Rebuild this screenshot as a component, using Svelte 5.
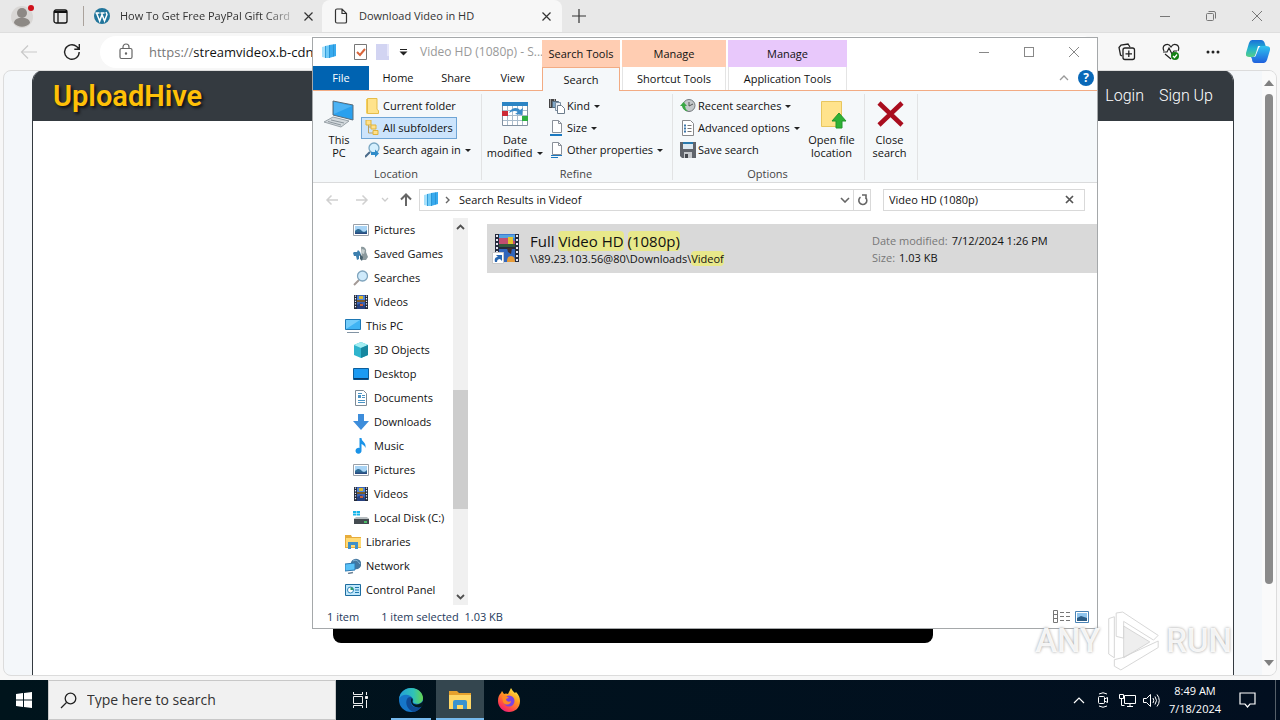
<script>
  const film = `<path d="M1 1h14v14H1z" fill="#222a3a"/><path d="M4 1h8v14H4z" fill="#3b62b5"/><path d="M4 2h8v5H4z" fill="#4f86d8"/><path d="M6 2h4v3H6z" fill="#d8b62e"/><path d="M4 6h8v2H4z" fill="#7a5a2a"/><path d="M4 11l4-2 4 3v3H4z" fill="#26407e"/><path d="M7 10h3v2H7z" fill="#c8603a"/><path d="M2.500 1.500v13M13.500 1.500v13" stroke="#eef" stroke-width="1.200" stroke-dasharray="1.300 1.300"/>`;
  const picture = `<path d="M.5 2.500h15v11H.5z" fill="#fff" stroke="#9aa0a8"/><path d="M2 4h12v8H2z" fill="#a9d4f5"/><path d="M2 9c3-3 5-2 7 0s4 0 5-1v4H2z" fill="#2f6c96"/><path d="M2 10.500h12V12H2z" fill="#2a4b80"/>`;
  const page = `<path d="M3.500.5h6l3 3v9h-9z" fill="#fff" stroke="#8a9099"/><path d="M9.500.5v3h3" fill="none" stroke="#8a9099"/>`;
  const icons = {
    film, picture,
    games: `<path d="M8 1c3-1 6 2 5 5l2 5-2 3H9z" fill="#8c9a9e"/><path d="M9 3l3 1-1 4-3-1z" fill="#c7d0d0"/><path d="M1 6h3l1-2 2 2 1 3-2 1v3l-2 1-1-4H1l-1-3z" fill="#3d7fae"/><path d="M7 8l3 3-1 4-2-2z" fill="#46606e"/>`,
    lens: `<path d="M1 15l5-5" stroke="#a39a96" stroke-width="2"/><circle cx="9.500" cy="6" r="5" fill="#cfeafb" stroke="#7fa4bd" stroke-width="1.300"/>`,
    pc: `<path d="M.5 1.500h15v10H.5z" fill="#3fb4f4" stroke="#1e78b4"/><path d="M1 2h14L1 11z" fill="#74cdfb"/><path d="M2 14.500h12" stroke="#8294a4"/>`,
    cube: `<path d="M8 0l7 3v10l-7 3-7-3V3z" fill="#2fb4cd"/><path d="M8 0l7 3-7 3-7-3z" fill="#a3eef2"/><path d="M8 6l7-3v10l-7 3z" fill="#16879f"/>`,
    desktop: `<path d="M.5 2.500h15v11H.5z" fill="#1b9af2" stroke="#0c5e9c"/><path d="M1 12h14v1.500H1z" fill="#083b6b"/>`,
    docs: `<path d="M2.500.5h8l3 3v12h-11z" fill="#fff" stroke="#7e8b96"/><path d="M5 5h3v3H5z" fill="#4b94c5"/><path d="M9 5.500h3M9 7.500h3M5 10.500h7M5 12.500h7M5 3.500h4" stroke="#4b94c5"/>`,
    down: `<path d="M5 0h6v7h5l-8 9-8-9h5z" fill="#3d8ddb"/>`,
    music: `<path d="M6.500 0H8.500c0 4 5 4 4 10-1-3-4-4-4-4v6.500a3 3 0 1 1-2-2.500z" fill="#1a93e8"/>`,
    disk: `<path d="M1 9l2-1h11l2 1v5H1z" fill="#444b50"/><path d="M1 9l2-2h11l2 2z" fill="#b7bdc0"/><path d="M11 12h3" stroke="#4de16e" stroke-width="1.500"/><path d="M0 1h3v2H0zM3.500 1H7v2H3.500zM0 3.500h3v2H0zM3.500 3.500H7v2H3.500z" fill="#17b5ea"/>`,
    libs: `<path d="M0 1h6l1 2h9v11H0z" fill="#e7ac3b"/><path d="M1 4h15v9H1z" fill="#ffda75"/><path d="M3 15V8h10v7h-3v-4H6v4z" fill="#3f90c9"/>`,
    net: `<circle cx="11" cy="6" r="5.300" fill="#4477a0"/><path d="M8 3c3-2 5 0 7 3" stroke="#86b8da" fill="none"/><path d="M0 6l10-1v7L0 13z" fill="#5ac2f8" stroke="#2b78b2"/><path d="M3 15.500l5-1" stroke="#6b8296" stroke-width="1.500"/>`,
    panel: `<path d="M.5 2.500h15v11H.5z" fill="#bfe7fb" stroke="#1d6c9f"/><circle cx="5.500" cy="8" r="3" fill="#fff" stroke="#2d86bb"/><path d="M5.500 8V5a3 3 0 0 1 3 3z" fill="#2d9c6a"/><path d="M10 5.500h4M10 8h4M10 10.500h4" stroke="#1f78ae"/>`,
    results: `<path d="M1 3l4-1v12l-4-1z" fill="#a6e0fb"/><path d="M4 2l5-1v13H4z" fill="#6fcbf8"/><path d="M8 1l7-1v12l-7 2z" fill="#38aaee"/><path d="M4.500 2v12M8.500 1v13M12.500 .5v12" stroke="#2690d2" stroke-width=".8"/>`,
    check: `<path d="M1.500 .5h12v15h-12z" fill="#fff" stroke="#777"/><path d="M4 8l3 3 5-6" fill="none" stroke="#d9653b" stroke-width="2"/>`,
    ghost: `<path d="M1 0h11v12h2v4H1z" fill="#d2d4f2"/><path d="M12 0h2v12h-2z" fill="#e6e6fa"/>`,
    folder: `<path d="M1 1h10v14.500H1z" fill="#f5cf5c"/><path d="M2.500.5h9.500v11l1.500 1v3h-11z" fill="#ffe38c" stroke="#e5bd4b"/>`,
    subs: `<path d="M3.500 5v8H9M3.500 7H9" fill="none" stroke="#b89f63"/><path d="M1 0h5v5H1zM6 5h5v4H6zM8 10.500h5v4H8z" fill="#ffe08a" stroke="#dfb33d"/>`,
    again: `<path d="M0 15l5-5" stroke="#4a6b8a" stroke-width="2"/><circle cx="9" cy="6" r="5" fill="#d4effd" stroke="#78a6c2" stroke-width="1.300"/><path d="M6 10h4V7.500l4 4-4 4V13H6z" fill="#2f8cc9"/>`,
    kind: `<path d="M0 1h7v9H0z" fill="#444"/><path d="M1.500 1.500v8M5.500 1.500v8" stroke="#fff" stroke-dasharray="1 1"/><path d="M3.500 3.500h6v6h-6z" fill="#80a8c8" stroke="#566d80"/><path d="M6.500 4.500h5v8h-5z" fill="#e8eef4" stroke="#7a8fa2"/><path d="M8.500 7.500h4l3 3v5h-7z" fill="#fff" stroke="#6c7c8b"/>`,
    size: page + `<path d="M1 15h12" stroke="#1c79c0" stroke-width="2"/>`,
    props: page + `<path d="M2 13.500h11M2 15.500h7" stroke="#1c79c0"/>`,
    recent: `<circle cx="9" cy="7.500" r="6" fill="#c4c8ca" stroke="#73797c"/><path d="M9 4v4l4-2" fill="none" stroke="#555"/><path d="M0 8l3.500-4L7 8H5q0 3 3 5-5 0-6-5z" fill="#3aa845"/>`,
    advanced: `<path d="M2.500.5h8l3 3v12h-11z" fill="#fff" stroke="#88898c"/><path d="M4 5.500h2M4 8.500h2M4 11.500h2" stroke="#3c76aa" stroke-width="2"/><path d="M7.500 5.500h4M7.500 8.500h4M7.500 11.500h4" stroke="#777"/>`,
    save: `<path d="M0 0h16v16H2l-2-2z" fill="#60646b"/><path d="M3 1h10v6H3z" fill="#dce8f1"/><path d="M3 0h10v2H3z" fill="#2979ad"/><path d="M4 10h8v6H4z" fill="#c5c8cc"/><path d="M5 12h3v4H5z" fill="#44474d"/>`
  };
  const tree = [
    ['Pictures', 'picture', 1], ['Saved Games', 'games', 1], ['Searches', 'lens', 1], ['Videos', 'film', 1],
    ['This PC', 'pc', 0], ['3D Objects', 'cube', 1], ['Desktop', 'desktop', 1], ['Documents', 'docs', 1],
    ['Downloads', 'down', 1], ['Music', 'music', 1], ['Pictures', 'picture', 1], ['Videos', 'film', 1],
    ['Local Disk (C:)', 'disk', 1], ['Libraries', 'libs', 0], ['Network', 'net', 0], ['Control Panel', 'panel', 0]
  ];
  const refine = [['Kind', 'kind', true], ['Size', 'size', true], ['Other properties', 'props', true]];
  const options = [['Recent searches', 'recent', true], ['Advanced options', 'advanced', true], ['Save search', 'save', false]];
  let address = $state('streamvideox.b-cdn.net');
  let query = $state('Video HD (1080p)');
  let taskQuery = $state('');
</script>

{#snippet icon(name)}
  <svg class="i16" viewBox="0 0 16 16" aria-hidden="true">{@html icons[name]}</svg>
{/snippet}

{#snippet cmd(label, name, drop, active)}
  <button class="cmd" class:active>{@render icon(name)}<span>{label}</span>{#if drop}<i class="caret"></i>{/if}</button>
{/snippet}

<div class="screen">
  <main class="browser">
    <div class="tabstrip">
      <button class="profile" aria-label="Profile">
        <svg width="24" height="24" viewBox="0 0 24 24"><circle cx="11" cy="13" r="11" fill="#d9d7d5"/><circle cx="11" cy="9" r="5" fill="#8d8985"/><path d="M3 19c0-7 16-7 16 0-4 5-12 5-16 0z" fill="#8d8985"/><circle cx="20" cy="4" r="3" fill="#d0111b"/></svg>
      </button>
      <button class="tabmenu" aria-label="Tab actions">
        <svg width="15" height="15" viewBox="0 0 15 15" fill="none" stroke="#111" stroke-width="1.300"><rect x="1" y="1" width="13" height="13" rx="2"/><path d="M1 3h13" stroke-width="2"/><path d="M5 3v11"/></svg>
      </button>
      <span class="tabline"></span>
      <button class="tab first">
        <svg width="16" height="16" viewBox="0 0 16 16"><circle cx="8" cy="8" r="8" fill="#21759b"/><path d="M2.500 5l3.200 8L8 6.500 10.500 13 13 6.500 12 4M1.500 5h4M6.500 5h4" fill="none" stroke="#fff" stroke-width="1.500"/></svg>
        <span class="fade">How To Get Free PayPal Gift Card</span>
        <svg class="x" width="9" height="9" viewBox="0 0 9 9"><path d="M.5.5l8 8M8.500.5l-8 8" stroke="#333" stroke-width="1.200"/></svg>
      </button>
      <button class="tab current">
        <svg width="14" height="16" viewBox="0 0 14 16"><path d="M1.500 2.500q0-1.500 1.500-1.500h5l4.500 4.500V14q0 1-1.500 1H3q-1.500 0-1.500-1.500zM8 1v4.500h4.500" fill="none" stroke="#333" stroke-width="1.200"/></svg>
        <span>Download Video in HD</span>
        <svg class="x" width="9" height="9" viewBox="0 0 9 9"><path d="M.5.5l8 8M8.500.5l-8 8" stroke="#333" stroke-width="1.200"/></svg>
      </button>
      <button class="plus" aria-label="New tab"><svg width="14" height="14" viewBox="0 0 14 14"><path d="M7 0v14M0 7h14" stroke="#333" stroke-width="1.200"/></svg></button>
      <div class="wincontrols">
        <button aria-label="Minimize browser"><svg width="12" height="12" viewBox="0 0 12 12"><path d="M1 6.500h10" stroke="#777"/></svg></button>
        <button aria-label="Restore browser"><svg width="12" height="12" viewBox="0 0 12 12" fill="none" stroke="#777"><rect x="1.500" y="3.500" width="7" height="7" rx="1"/><path d="M3.500 1.500H9q1.500 0 1.500 1.500v5.500"/></svg></button>
        <button aria-label="Close browser"><svg width="12" height="12" viewBox="0 0 12 12"><path d="M1 1l10 10M11 1L1 11" stroke="#777"/></svg></button>
      </div>
    </div>
    <div class="toolbar">
      <button aria-label="Back"><svg width="18" height="14" viewBox="0 0 18 14" fill="none" stroke="#c9c9c9" stroke-width="1.200"><path d="M17 7H1.500M8 .5L1.500 7 8 13.500"/></svg></button>
      <button aria-label="Reload"><svg width="18" height="18" viewBox="0 0 18 18" fill="none" stroke="#222" stroke-width="1.400"><path d="M16.200 9a7.300 7.300 0 1 1-2.500-5.500L16 6M16.300 1v5.200h-5"/></svg></button>
      <label class="urlbar">
        <svg width="14" height="17" viewBox="0 0 14 17" fill="none" stroke="#666" stroke-width="1.200"><rect x="1" y="5.500" width="12" height="10" rx="1.500"/><path d="M4 5.500V4a3 3 0 0 1 6 0v1.500"/><circle cx="7" cy="10.500" r=".6" fill="#666"/></svg>
        <span class="scheme">https://</span><input aria-label="Address" bind:value={address} />
      </label>
      <div class="tools">
        <button aria-label="Collections"><svg width="18" height="18" viewBox="0 0 18 18" fill="none" stroke="#222" stroke-width="1.300"><path d="M4 13l-1.500-1L1 4.500 3 2l7-1 2 3"/><rect x="5" y="5" width="11.500" height="11.500" rx="2"/><path d="M10.800 7.500v6.500M7.500 10.800h6.500"/></svg></button>
        <button aria-label="Performance"><svg width="18" height="18" viewBox="0 0 18 18" fill="none" stroke="#222" stroke-width="1.200"><path d="M2 8C-1 2 6-1 9 4c3-5 10-2 7 4M3 11l6 5"/><path d="M1 9h4l2-4 3 6 2-3h3"/><circle cx="13" cy="13" r="4" fill="#148014" stroke="none"/><path d="M11 13l1.500 1.500L15 11.500" stroke="#fff"/></svg></button>
        <button aria-label="More"><svg width="14" height="4" viewBox="0 0 14 4" fill="#222"><circle cx="2" cy="2" r="1.500"/><circle cx="7" cy="2" r="1.500"/><circle cx="12" cy="2" r="1.500"/></svg></button>
        <button aria-label="Copilot"><svg width="24" height="23" viewBox="0 0 24 23"><defs><linearGradient id="ca" x1="0" y1="0" x2="0" y2="1"><stop offset="0" stop-color="#1a70d8"/><stop offset=".5" stop-color="#22b3cf"/><stop offset="1" stop-color="#57cf86"/></linearGradient><linearGradient id="cb" x1="0" y1="0" x2="0" y2="1"><stop offset="0" stop-color="#2fc3ef"/><stop offset="1" stop-color="#2060dd"/></linearGradient></defs><path d="M6 0h9q3 0 4 4l1 3h-5q-2 0-3 3l-2 5q-1 2-4 2H3q-4 0-3-4l3-10q1-3 3-3z" fill="url(#ca)"/><path d="M18 23H9q-3 0-3-4l-1-2h2q2 0 3-3l2-5q1-3 4-3h4q5 0 4 4l-3 10q-1 3-3 3z" fill="url(#cb)"/><path d="M12 6h2.500q-1.500 1-2.500 4l-2 5q-.5 2-1.500 2H8q1-1 2-4z" fill="#fff"/></svg></button>
      </div>
    </div>
    <div class="frame">
      <div class="site">
        <header><a class="brand" href="#home">UploadHive</a><nav><a href="#login">Login</a><a href="#signup">Sign Up</a></nav></header>
        <div class="player"></div>
      </div>
      <div class="vscroll"><i class="up"></i><span></span><i class="dn"></i></div>
    </div>
  </main>

  <section class="window" aria-label="File Explorer">
    <div class="head">
      <div class="headleft">
        <div class="quick">
          {@render icon('results')}<span class="bar"></span>{@render icon('check')}{@render icon('ghost')}
          <svg width="9" height="7" viewBox="0 0 9 7"><path d="M1 .5h7" stroke="#222"/><path d="M.5 2.500h8L4.500 6.500z" fill="#222"/></svg>
          <span class="bar"></span><span class="title">Video HD (1080p) - S...</span>
        </div>
        <div class="menus"><button class="file">File</button><button>Home</button><button>Share</button><button>View</button></div>
      </div>
      <div class="ctx search"><span>Search Tools</span><button>Search</button></div>
      <div class="ctx shortcut"><span>Manage</span><button>Shortcut Tools</button></div>
      <div class="ctx app"><span>Manage</span><button>Application Tools</button></div>
      <div class="headright">
        <div class="wc">
          <button aria-label="Minimize"><svg width="12" height="12" viewBox="0 0 12 12"><path d="M1 6.500h10" stroke="#888"/></svg></button>
          <button aria-label="Maximize"><svg width="12" height="12" viewBox="0 0 12 12"><rect x="1.500" y="1.500" width="9" height="9" fill="none" stroke="#888"/></svg></button>
          <button aria-label="Close"><svg width="12" height="12" viewBox="0 0 12 12"><path d="M1 1l10 10M11 1L1 11" stroke="#888"/></svg></button>
        </div>
        <div class="helprow">
          <button aria-label="Collapse ribbon"><svg width="10" height="6" viewBox="0 0 10 6"><path d="M1 5l4-4 4 4" fill="none" stroke="#999" stroke-width="1.300"/></svg></button>
          <button class="help" aria-label="Help">?</button>
        </div>
      </div>
    </div>

    <div class="ribbon">
      <div class="group location">
        <div class="gbody">
          <button class="big"><svg width="32" height="32" viewBox="0 0 32 32"><path d="M10 3l20 4v15L10 17z" fill="#2aa0ee" stroke="#5b6c78"/><path d="M11 4l18 4-18 8z" fill="#4db3f4"/><path d="M1 24l9-5 16 4-8 6z" fill="#d3d9dd" stroke="#99a2a8"/><path d="M5 23.500l13 3.500M8 22l13 3" stroke="#8c969d"/></svg><span>This<br />PC</span></button>
          <div class="stack">
            {@render cmd('Current folder', 'folder', false, false)}
            {@render cmd('All subfolders', 'subs', false, true)}
            {@render cmd('Search again in', 'again', true, false)}
          </div>
        </div>
        <div class="gname">Location</div>
      </div>
      <div class="group refine">
        <div class="gbody">
          <button class="big"><svg width="32" height="32" viewBox="0 0 32 32"><path d="M3.500 4.500h25v23h-25z" fill="#fff" stroke="#8090a0"/><path d="M3 4h26v4H3z" fill="#2b84c4"/><path d="M4 12.500h24M4 17.500h24M4 22.500h24M8.500 8v19M13.500 8v19M18.500 8v19M23.500 8v19" stroke="#a9bccb"/><path d="M3 13h6v5H3z" fill="#cc2a36"/><path d="M23 18h6v5h-6z" fill="#2eaf3f"/><path d="M10 15c2-6 9-6 11-3l3-2-1 7-7-1 3-2c-3-2-6-1-9 1z" fill="#3a8bc8"/></svg><span>Date<br />modified <i class="caret"></i></span></button>
          <div class="stack">{#each refine as r}{@render cmd(r[0], r[1], r[2], false)}{/each}</div>
        </div>
        <div class="gname">Refine</div>
      </div>
      <div class="group options">
        <div class="gbody">
          <div class="stack">{#each options as r}{@render cmd(r[0], r[1], r[2], false)}{/each}</div>
          <button class="big"><svg width="32" height="32" viewBox="0 0 32 32"><path d="M5.500 3.500h20v25h-20z" fill="#ffe38c" stroke="#e8c65e"/><path d="M23 15l7 8h-4v7h-6v-7h-4z" fill="#2eb135" stroke="#23962b"/></svg><span>Open file<br />location</span></button>
        </div>
        <div class="gname">Options</div>
      </div>
      <div class="group closing">
        <div class="gbody"><button class="big"><svg width="32" height="32" viewBox="0 0 32 32"><path d="M5 5l23 22M28 5L5 27" stroke="#a90d1e" stroke-width="4.500"/></svg><span>Close<br />search</span></button></div>
      </div>
    </div>

    <div class="location-row">
      <button aria-label="Previous"><svg width="14" height="12" viewBox="0 0 14 12" fill="none" stroke="#d0d0d0" stroke-width="1.500"><path d="M13 6H2M6.500 1.500L2 6l4.500 4.500"/></svg></button>
      <button aria-label="Next"><svg width="14" height="12" viewBox="0 0 14 12" fill="none" stroke="#d0d0d0" stroke-width="1.500"><path d="M1 6h11M7.500 1.500L12 6l-4.500 4.500"/></svg></button>
      <button class="recentloc" aria-label="Recent locations"><svg width="8" height="5" viewBox="0 0 8 5" fill="none" stroke="#ccc" stroke-width="1.300"><path d="M1 1l3 3 3-3"/></svg></button>
      <button class="goup" aria-label="Up"><svg width="14" height="14" viewBox="0 0 14 14" fill="none" stroke="#666" stroke-width="2"><path d="M7 13V2M2 6.500l5-5 5 5"/></svg></button>
      <div class="crumbs">
        {@render icon('results')}
        <svg class="sep" width="6" height="8" viewBox="0 0 6 8" fill="none" stroke="#666" stroke-width="1.400"><path d="M1 1l3 3-3 3"/></svg>
        <span>Search Results in Videof</span>
        <button aria-label="Address history"><svg width="10" height="6" viewBox="0 0 10 6" fill="none" stroke="#666" stroke-width="1.600"><path d="M1 1l4 4 4-4"/></svg></button>
        <button class="refresh" aria-label="Refresh"><svg width="11" height="12" viewBox="0 0 11 12" fill="none" stroke="#666" stroke-width="1.600"><path d="M8.500 3.500a4 4 0 1 1-5-.3M5 1h4v4"/></svg></button>
      </div>
      <label class="find"><input aria-label="Search" bind:value={query} /><svg width="9" height="9" viewBox="0 0 9 9"><path d="M1 1l7 7M8 1L1 8" stroke="#555" stroke-width="1.700"/></svg></label>
    </div>

    <div class="panes">
      <ul class="tree">
        {#each tree as [label, name, depth]}
          <li class:deep={depth === 1}>{@render icon(name)}<span>{label}</span></li>
        {/each}
      </ul>
      <div class="treescroll">
        <svg width="9" height="6" viewBox="0 0 9 6" fill="none" stroke="#505050" stroke-width="1.800"><path d="M1 5l3.500-3.500L8 5"/></svg>
        <span class="thumb"></span>
        <svg width="9" height="6" viewBox="0 0 9 6" fill="none" stroke="#505050" stroke-width="1.800"><path d="M1 1l3.500 3.500L8 1"/></svg>
      </div>
      <div class="results">
        <div class="row">
          <svg width="30" height="34" viewBox="0 0 30 34"><path d="M3 2h24v28H3z" fill="#252b3c"/><path d="M7 2h16v13H7z" fill="#3f7bd1"/><path d="M7 6l6-1 10 4v6H7z" fill="#c34d70"/><path d="M7 3h16v3H7z" fill="#54a2df"/><path d="M16 5h5v7h-5z" fill="#e2c22d"/><path d="M7 12h16v3H7z" fill="#33593d"/><path d="M7 17h16v13H7z" fill="#3165bb"/><path d="M15 16l5 0-1 6-3-2z" fill="#432c2a"/><path d="M15 30q0-6 4-6t4 6z" fill="#e79b38"/><path d="M5 3v27M25 3v27" stroke="#e8e8f4" stroke-width="2" stroke-dasharray="2 2"/><path d="M.5 20.500h11v11H.5z" fill="#fff" stroke="#c8c8c8"/><path d="M3 30c-1-4 1-5 3-5l-2-2h6v6l-2-2c-2 0-3 1-3 3z" fill="#2967b0"/></svg>
          <div class="names"><strong>Full <mark>Video HD</mark> <mark>(1080p)</mark></strong><span>\\89.23.103.56@80\Downloads\<mark>Videof</mark></span></div>
          <dl><div><dt>Date modified:</dt><dd>7/12/2024 1:26 PM</dd></div><div><dt>Size:</dt><dd>1.03 KB</dd></div></dl>
        </div>
      </div>
    </div>

    <div class="status">
      <span>1 item</span><span>1 item selected&nbsp; 1.03 KB</span>
      <div class="views">
        <button aria-label="Details view"><svg width="18" height="13" viewBox="0 0 18 13"><path d="M1.500.5h4v12h-4zM1 4.500h5M1 8.500h5" fill="none" stroke="#777"/><path d="M8 2.500h10M8 6.500h10M8 10.500h10" stroke="#777" stroke-dasharray="4 2"/></svg></button>
        <button aria-label="Large icons view"><svg width="14" height="12" viewBox="0 0 14 12"><path d="M.5.5h13v11H.5z" fill="#fff" stroke="#4a83b5"/><path d="M2 2h10v8H2z" fill="#8fc5ee"/><path d="M2 7l4-2 6 2v3H2z" fill="#2c5d86"/></svg></button>
      </div>
    </div>
  </section>

  <div class="watermark" aria-label="ANY.RUN">
    <span>ANY</span>
    <svg width="56" height="64" viewBox="0 0 60 64" fill="#fff" fill-opacity=".8" stroke="#d4d4d4" stroke-width="1"><path d="M4 8l6-2v44l-6-4z"/><path d="M12 2l7-1 38 25-5 5-32-20v18l-8-2z"/><path d="M57 32v7L17 63l-7-4v-7l8-2z"/><path d="M20 16l28 17-28 17z" fill="#ddd" fill-opacity=".5"/></svg>
    <span>RUN</span>
  </div>

  <footer class="taskbar">
    <button class="start" aria-label="Start"><svg width="16" height="16" viewBox="0 0 16 16" fill="#fff"><path d="M0 2l7-1v6.500H0zM8 1l8-1v7.500H8zM0 8.500h7V15l-7-1zM8 8.500h8V16l-8-1z"/></svg></button>
    <label class="tasksearch"><svg width="17" height="17" viewBox="0 0 17 17" fill="none" stroke="#222" stroke-width="1.300"><circle cx="10.500" cy="6.500" r="5.300"/><path d="M6.500 10.500L1 16"/></svg><input aria-label="Type here to search" placeholder="Type here to search" bind:value={taskQuery} /></label>
    <div class="apps">
      <button class="task view" aria-label="Task view"><svg width="16" height="16" viewBox="0 0 16 16" fill="none" stroke="#eee"><path d="M1.500 4.500h9v7h-9zM1.500 0v2.500h9V0M1.500 16v-2.500h9V16M14.500 0v3M14.500 8v8"/><path d="M13.500 4.500h2v2h-2z" fill="#fff"/></svg></button>
      <button class="task open" aria-label="Edge"><svg width="24" height="24" viewBox="0 0 24 24"><defs><linearGradient id="ea" x1="0" x2="1"><stop offset="0" stop-color="#239ed8"/><stop offset=".6" stop-color="#2fc2b8"/><stop offset="1" stop-color="#65d44f"/></linearGradient></defs><circle cx="12" cy="12" r="12" fill="#1676c8"/><path d="M0 11C1 4 6 0 12 0c8 0 12 6 12 10 0 5-5 7-9 5-2-1 0-2-1-4-3-6-12-5-14 0z" fill="url(#ea)"/><path d="M8 11c-2 4 0 11 7 13 4-1 7-4 8-6-5 3-12 1-11-5 0-2 1-2 1-3-1-2-4-1-5 1z" fill="#0f4a94"/><path d="M13 10c2 2-1 4 2 6 3 1 7 0 9-3v5c-4 3-12 1-12-5 0-1 0-2 1-3z" fill="#031a22"/></svg></button>
      <button class="task open focus" aria-label="File Explorer"><svg width="24" height="20" viewBox="0 0 24 20"><path d="M1 1h8l2 2h12v16H1z" fill="#e6a12d"/><path d="M1 5h22v14H1z" fill="#ffd766"/><path d="M5 19v-7q0-2 2-2h10q2 0 2 2v7h-4v-4H9v4z" fill="#3b92cf"/></svg></button>
      <button class="task" aria-label="Firefox"><svg width="24" height="24" viewBox="0 0 24 24"><defs><linearGradient id="ff" x1=".8" y1="0" x2=".2" y2="1"><stop offset="0" stop-color="#fff04a"/><stop offset=".4" stop-color="#ff9a1f"/><stop offset=".8" stop-color="#ff3b50"/><stop offset="1" stop-color="#e3188a"/></linearGradient></defs><path d="M5 3l2 3q2-1 4 0l3-6q2 4 4 5l1-1c3 3 4 6 4 9 0 7-5 11-11 11S1 19 1 13c0-4 1-6 3-8z" fill="url(#ff)"/><circle cx="12" cy="13" r="5.500" fill="#7b43e0"/><path d="M5 8q4-1 7 2-3 0-3 2 2 3 5 1c0 4-6 5-8 1z" fill="#ff8a22"/></svg></button>
    </div>
    <div class="tray">
      <button aria-label="Hidden icons"><svg width="12" height="8" viewBox="0 0 12 8" fill="none" stroke="#fff" stroke-width="1.200"><path d="M1 7l5-5 5 5"/></svg></button>
      <button aria-label="Camera"><svg width="14" height="16" viewBox="0 0 14 16" fill="none" stroke="#fff"><rect x="2.500" y="4.500" width="6" height="7" rx="1"/><path d="M8.500 7l3-1.500v5L8.500 9M3 2q4-2.500 8 0M3 14q4 2.500 8 0"/></svg></button>
      <button aria-label="Network status"><svg width="17" height="15" viewBox="0 0 17 15" fill="none" stroke="#fff"><path d="M5.500 2.500h11v8h-11zM8 13.500h6M11 10.500v3M.5 1.500h4v4h-4zM2.500 5.500v7h3"/></svg></button>
      <button aria-label="Volume"><svg width="17" height="15" viewBox="0 0 17 15" fill="none" stroke="#fff"><path d="M.5 5.500h3l4-4v12l-4-4h-3zM10 5q1.500 2.500 0 5M12 3.500q3 4 0 8M14 1.500q4.500 6 0 12"/></svg></button>
      <time>8:49 AM<br />7/18/2024</time>
      <button aria-label="Notifications"><svg width="17" height="16" viewBox="0 0 17 16" fill="none" stroke="#fff" stroke-width="1.200"><path d="M1 1h15v11h-5l-2.500 3L6 12H1z"/></svg></button>
      <span class="peek"></span>
    </div>
  </footer>
</div>

<style>
  :global(body) { margin: 0; }
  .screen, .screen * { box-sizing: border-box; }
  .screen { position: relative; height: 100vh; display: flex; flex-direction: column; overflow: hidden; font: 11px/16px "Open Sans", "Noto Sans", sans-serif; color: #111; }
  button { border: 0; padding: 0; margin: 0; background: none; font: inherit; color: inherit; display: flex; align-items: center; justify-content: center; flex: none; white-space: nowrap; }
  input { border: 0; padding: 0; outline: 0; background: none; font: inherit; color: inherit; min-width: 0; flex: 1; }
  svg { display: block; flex: none; }
  .i16 { width: 16px; height: 16px; }

  .browser { flex: 1; min-height: 0; display: flex; flex-direction: column; background: #f7f7f7; }
  .tabstrip { height: 32px; flex: none; display: flex; align-items: center; background: #e8e8e8; color: #333; }
  .profile { margin-left: 11px; }
  .tabmenu { margin-left: 18px; }
  .tabline { width: 1px; height: 20px; background: #aaa29c; margin: 0 10px 0 15px; }
  .tab { height: 32px; gap: 10px; justify-content: flex-start; }
  .tab .x { margin-left: auto; }
  .first { width: 228px; padding-right: 9px; }
  .first .fade { mask-image: linear-gradient(90deg, #000 85%, rgba(0, 0, 0, .3)); }
  .current { width: 240px; padding: 0 11px 0 12px; gap: 11px; background: #f7f7f7; border-radius: 8px 8px 0 0; }
  .plus { margin-left: 10px; }
  .wincontrols { margin-left: auto; display: flex; }
  .wincontrols button { width: 46px; height: 32px; }
  .toolbar { height: 38px; flex: none; display: flex; align-items: center; border-top: 1px solid #dedede; }
  .toolbar > button { margin-left: 20px; width: 18px; }
  .toolbar > button + button { margin-left: 25px; }
  .urlbar { flex: 1; height: 32px; margin-left: 19px; border-radius: 16px; background: #fff; display: flex; align-items: center; padding: 0 19px; font-size: 13px; }
  .scheme { margin-left: 16px; color: #777; }
  .tools { display: flex; width: 182px; padding: 0 10px 0 20px; justify-content: space-between; align-items: center; }
  .frame { flex: 1; min-height: 0; margin: 0 3px 4px; border: 1px solid #dcdcdc; border-radius: 8px; background: #f4f7fa; display: flex; overflow: hidden; }
  .site { flex: 1; margin: -1px 28px 0 28px; background: #fff; border: 1px solid #343a40; border-width: 0 1px; border-radius: 12px 12px 0 0; overflow: hidden; display: flex; flex-direction: column; align-items: center; }
  .site header { align-self: stretch; height: 51px; flex: none; background: #343a40; display: flex; align-items: center; justify-content: space-between; padding: 0 20px; font-family: Roboto, sans-serif; }
  .site a { color: #fff; text-decoration: none; font-size: 16px; font-weight: 300; }
  .site nav { display: flex; gap: 15px; }
  .site a.brand { font-size: 29px; line-height: 36px; font-weight: 600; color: #ffc107; text-shadow: 2px 2px 3px #111; }
  .player { flex: none; width: 50%; height: 522px; background: #000; border-radius: 8px; }
  .vscroll { width: 14px; flex: none; background: #fafafa; display: flex; flex-direction: column; align-items: center; padding: 9px 0; gap: 8px; }
  .vscroll span { width: 8px; height: 490px; border-radius: 4px; background: #8a8a8a; }
  .vscroll i { border: 5px solid transparent; }
  .vscroll .up { border-top: 0; border-bottom: 6px solid #808080; }
  .vscroll .dn { border-bottom: 0; border-top: 6px solid #808080; margin-top: auto; }

  .window { position: absolute; inset: 37px 182px 91px 312px; background: #fff; border: 1px solid #a5a8aa; display: flex; flex-direction: column; }
  .head { height: 53px; flex: none; display: flex; gap: 2px; border-bottom: 1px solid #f2ab83; }
  .headleft { width: 227px; display: flex; flex-direction: column; }
  .quick { height: 29px; display: flex; align-items: center; gap: 8px; padding-left: 8px; color: #999; font-size: 12px; white-space: nowrap; }
  .quick .i16 + .i16 { margin-left: -2px; }
  .bar { width: 1px; height: 11px; background: #999; }
  .title { margin-left: -4px; }
  .menus { height: 24px; display: flex; }
  .menus button { width: 58px; }
  .menus .file { width: 56px; background: #0063b1; color: #fff; }
  .menus button:last-child { width: 55px; }
  .ctx { display: flex; flex-direction: column; padding-top: 2px; }
  .ctx span { height: 27px; flex: none; display: flex; align-items: center; justify-content: center; background: #ffcdb2; }
  .ctx button { height: 23px; border: solid #e4e4e4; border-width: 0 1px; }
  .search { width: 78px; }
  .ctx.search button { height: 24px; background: #f5f8fa; border: 1px solid #f2ab83; border-bottom: 0; }
  .shortcut { width: 104px; }
  .app { width: 119px; }
  .app span { background: #e8c8fb; }
  .headright { flex: 1; display: flex; flex-direction: column; }
  .wc { height: 28px; display: flex; justify-content: flex-end; padding-right: 1px; }
  .wc button { width: 45px; }
  .helprow { height: 24px; display: flex; justify-content: flex-end; align-items: center; gap: 9px; padding-right: 3px; }
  .help { width: 16px; height: 16px; border-radius: 50%; background: #0968b8; color: #fff; font-weight: 700; font-size: 12px; }

  .ribbon { height: 92px; flex: none; display: flex; padding-top: 3px; background: #f5f8fa; border-bottom: 1px solid #dadbdc; }
  .group { border-right: 1px solid #e2e3e4; height: 86px; display: flex; flex-direction: column; }
  .location { width: 169px; }
  .refine { width: 191px; }
  .options { width: 192px; }
  .closing { width: 53px; }
  .gbody { display: flex; height: 71px; flex: none; }
  .gname { text-align: center; color: #444; line-height: 18px; padding-right: 2px; }
  .stack { display: flex; flex-direction: column; align-items: flex-start; padding-top: 1px; }
  .cmd { height: 22px; padding: 0 3px; gap: 2px; border: 1px solid transparent; }
  .cmd.active { background: #cce4fc; border-color: #6fa5d5; }
  .caret { display: inline-block; border: 3px solid transparent; border-top-color: #222; border-bottom: 0; margin-left: 2px; vertical-align: 2px; }
  .big { flex-direction: column; justify-content: flex-start; padding-top: 4px; gap: 3px; line-height: 13px; white-space: nowrap; }
  .location .big { width: 52px; margin-right: -4px; }
  .refine .big { width: 63px; padding-left: 3px; }
  .options .big { flex: 1; padding-right: 2px; }
  .options .stack { padding-left: 3px; width: 128px; }
  .closing .big { flex: 1; padding-right: 3px; }

  .location-row { height: 35px; flex: none; display: flex; align-items: center; padding: 0 12px 2px; }
  .location-row > button { width: 14px; margin-right: 16px; }
  .location-row > .recentloc { width: 8px; margin-right: 10px; margin-left: -4px; }
  .location-row > .goup { margin-right: 6px; }
  .crumbs { flex: 1; height: 22px; border: 1px solid #d9d9d9; display: flex; align-items: center; padding-left: 3px; }
  .sep { margin: 0 8px 0 6px; }
  .crumbs button { width: 17px; height: 20px; }
  .crumbs button:first-of-type { margin-left: auto; }
  .crumbs .refresh { border-left: 1px solid #d9d9d9; }
  .find { width: 202px; height: 22px; margin-left: 12px; border: 1px solid #d9d9d9; display: flex; align-items: center; padding: 0 10px 0 5px; }

  .panes { flex: 1; min-height: 0; display: flex; }
  .tree { width: 140px; flex: none; margin: 0; padding: 0; list-style: none; overflow: hidden; }
  .tree li { height: 24px; display: flex; align-items: center; gap: 5px; padding-left: 32px; white-space: nowrap; }
  .tree li.deep { padding-left: 40px; }
  .treescroll { width: 15px; flex: none; background: #f0f0f0; display: flex; flex-direction: column; align-items: center; justify-content: space-between; padding: 6px 0 5px; }
  .thumb { width: 15px; height: 119px; margin-top: 74px; background: #cdcdcd; }
  .results { flex: 1; padding: 6px 0 0 19px; }
  .row { height: 49px; background: #d9d9d9; display: flex; align-items: center; padding-left: 5px; }
  .names { flex: 1; display: flex; flex-direction: column; margin-left: 8px; }
  .names strong { font-size: 15px; line-height: 20px; font-weight: 400; }
  mark { background: #e8e88a; border-radius: 4px; color: inherit; }
  dl { margin: 0; padding-top: 1px; width: 225px; color: #777; line-height: 17px; }
  dl div { display: flex; gap: 4px; }
  dd { margin: 0; color: #111; }
  .status { height: 23px; flex: none; display: flex; align-items: center; gap: 22px; padding: 0 8px 0 14px; color: #1e395b; }
  .views { margin-left: auto; display: flex; gap: 5px; }

  .watermark { position: absolute; right: 48px; bottom: 47px; display: flex; align-items: center; gap: 5px; color: rgba(255, 255, 255, .9); font: 500 33px/64px Roboto, sans-serif; text-shadow: 0 0 3px #999; pointer-events: none; }

  .taskbar { height: 40px; flex: none; display: flex; background: #04151f linear-gradient(90deg, #00141c, #020f20); color: #fff; }
  .start { width: 48px; }
  .tasksearch { width: 288px; background: #f1f1f1; border: 1px solid #c8c8c8; display: flex; align-items: center; padding: 0 11px; gap: 10px; color: #333; font-size: 14px; }
  .tasksearch input::placeholder { color: #333; opacity: 1; }
  .apps { display: flex; gap: 1px; }
  .task { width: 48px; }
  .view { margin-right: 2px; }
  .open { background: linear-gradient(#76b9ed, #76b9ed) center bottom / 40px 2px no-repeat; }
  .focus { background: linear-gradient(#76b9ed, #76b9ed) center bottom / 48px 2px no-repeat #34464f; }
  .tray { margin-left: auto; display: flex; align-items: center; }
  .tray button { width: 24px; height: 40px; }
  .tray time { text-align: center; line-height: 18px; width: 58px; margin: 0 11px 0 3px; }
  .peek { width: 1px; height: 40px; background: #566069; margin: 0 4px 0 16px; }
</style>
